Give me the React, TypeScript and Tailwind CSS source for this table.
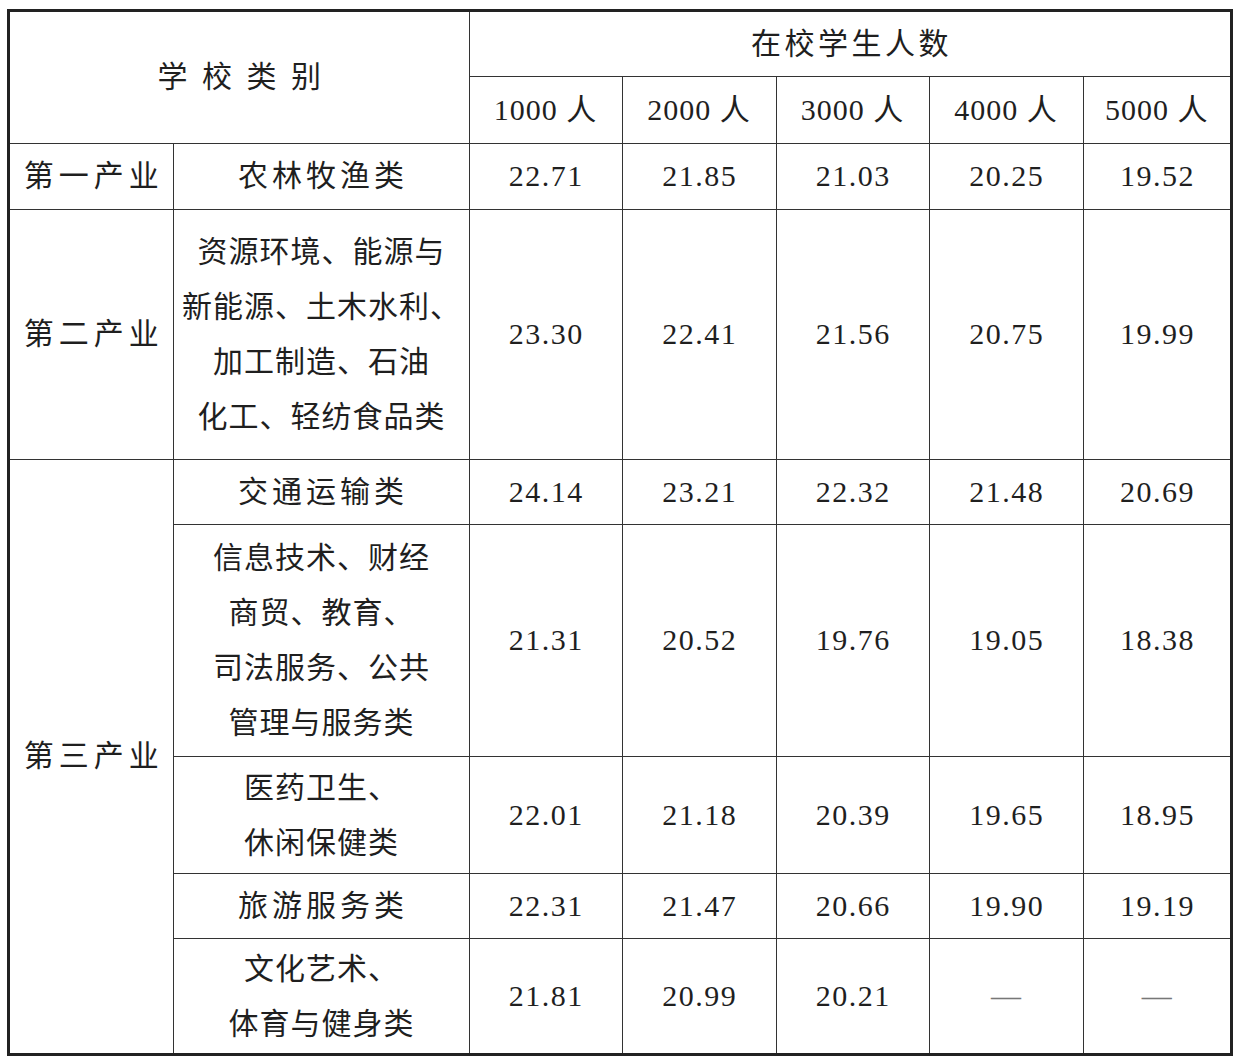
const cellFont = { fontFamily: '"Liberation Serif", "Noto Sans CJK SC", serif' };

type Row = {
  group?: { label: string; span: number };
  name: string[];
  values: string[];
  h: string;
};

const rows: Row[] = [
  { group: { label: '第一产业', span: 1 }, name: ['农林牧渔类'], values: ['22.71', '21.85', '21.03', '20.25', '19.52'], h: 'h-[66px]' },
  {
    group: { label: '第二产业', span: 1 },
    name: ['资源环境、能源与', '新能源、土木水利、', '加工制造、石油', '化工、轻纺食品类'],
    values: ['23.30', '22.41', '21.56', '20.75', '19.99'],
    h: 'h-[250px]',
  },
  { group: { label: '第三产业', span: 5 }, name: ['交通运输类'], values: ['24.14', '23.21', '22.32', '21.48', '20.69'], h: 'h-[65px]' },
  {
    name: ['信息技术、财经', '商贸、教育、', '司法服务、公共', '管理与服务类'],
    values: ['21.31', '20.52', '19.76', '19.05', '18.38'],
    h: 'h-[232px]',
  },
  { name: ['医药卫生、', '休闲保健类'], values: ['22.01', '21.18', '20.39', '19.65', '18.95'], h: 'h-[117px]' },
  { name: ['旅游服务类'], values: ['22.31', '21.47', '20.66', '19.90', '19.19'], h: 'h-[65px]' },
  { name: ['文化艺术、', '体育与健身类'], values: ['21.81', '20.99', '20.21', '—', '—'], h: 'h-[115px]' },
];

const td = 'border border-[#333] p-0 text-center align-middle';

function Name({ lines }: { lines: string[] }) {
  if (lines.length === 1) {
    return <span className="-mr-[4px] tracking-[4px] whitespace-nowrap">{lines[0]}</span>;
  }
  return (
    <div className="leading-[55px] whitespace-nowrap">
      {lines.map((l) => (
        <div key={l}>
          <span className="-mr-[1px] tracking-[1px]">{l}</span>
        </div>
      ))}
    </div>
  );
}

function Value({ v }: { v: string }) {
  if (v === '—') return <span className="text-[#777]">—</span>;
  return <span className="-mr-[1.5px] tracking-[1.5px]">{v}</span>;
}

export default function App() {
  return (
    <div className="min-h-[1060px] w-[1238px] bg-white pl-[7px] pt-[9px] text-[30px] leading-none text-[#1f1f1f]" style={cellFont}>
      <div className="w-[1226px] border-[3px] border-[#222]">
        <table className="w-[1220px] table-fixed border-collapse border-hidden">
          <colgroup>
            <col className="w-[163px]" />
            <col className="w-[296px]" />
            <col className="w-[153px]" />
            <col className="w-[154px]" />
            <col className="w-[153px]" />
            <col className="w-[154px]" />
            <col className="w-[147px]" />
          </colgroup>
          <thead>
            <tr className="h-[64px]">
              <th colSpan={2} rowSpan={2} className={`${td} font-normal`}>
                <span className="-mr-[3.5px] tracking-[3.5px] whitespace-pre">学 校 类 别</span>
              </th>
              <th colSpan={5} className={`${td} font-normal`}>
                <span className="-mr-[3.5px] tracking-[3.5px]">在校学生人数</span>
              </th>
            </tr>
            <tr className="h-[67px]">
              {['1000', '2000', '3000', '4000', '5000'].map((n) => (
                <th key={n} className={`${td} font-normal`}>
                  <span className="tracking-[1px] whitespace-nowrap">{n} 人</span>
                </th>
              ))}
            </tr>
          </thead>
          <tbody>
            {rows.map((r, i) => (
              <tr key={i} className={r.h}>
                {r.group && (
                  <td rowSpan={r.group.span} className={td}>
                    <span className="-mr-[5px] tracking-[5px] whitespace-nowrap">{r.group.label}</span>
                  </td>
                )}
                <td className={td}>
                  <Name lines={r.name} />
                </td>
                {r.values.map((v, j) => (
                  <td key={j} className={td}>
                    <Value v={v} />
                  </td>
                ))}
              </tr>
            ))}
          </tbody>
        </table>
      </div>
    </div>
  );
}
